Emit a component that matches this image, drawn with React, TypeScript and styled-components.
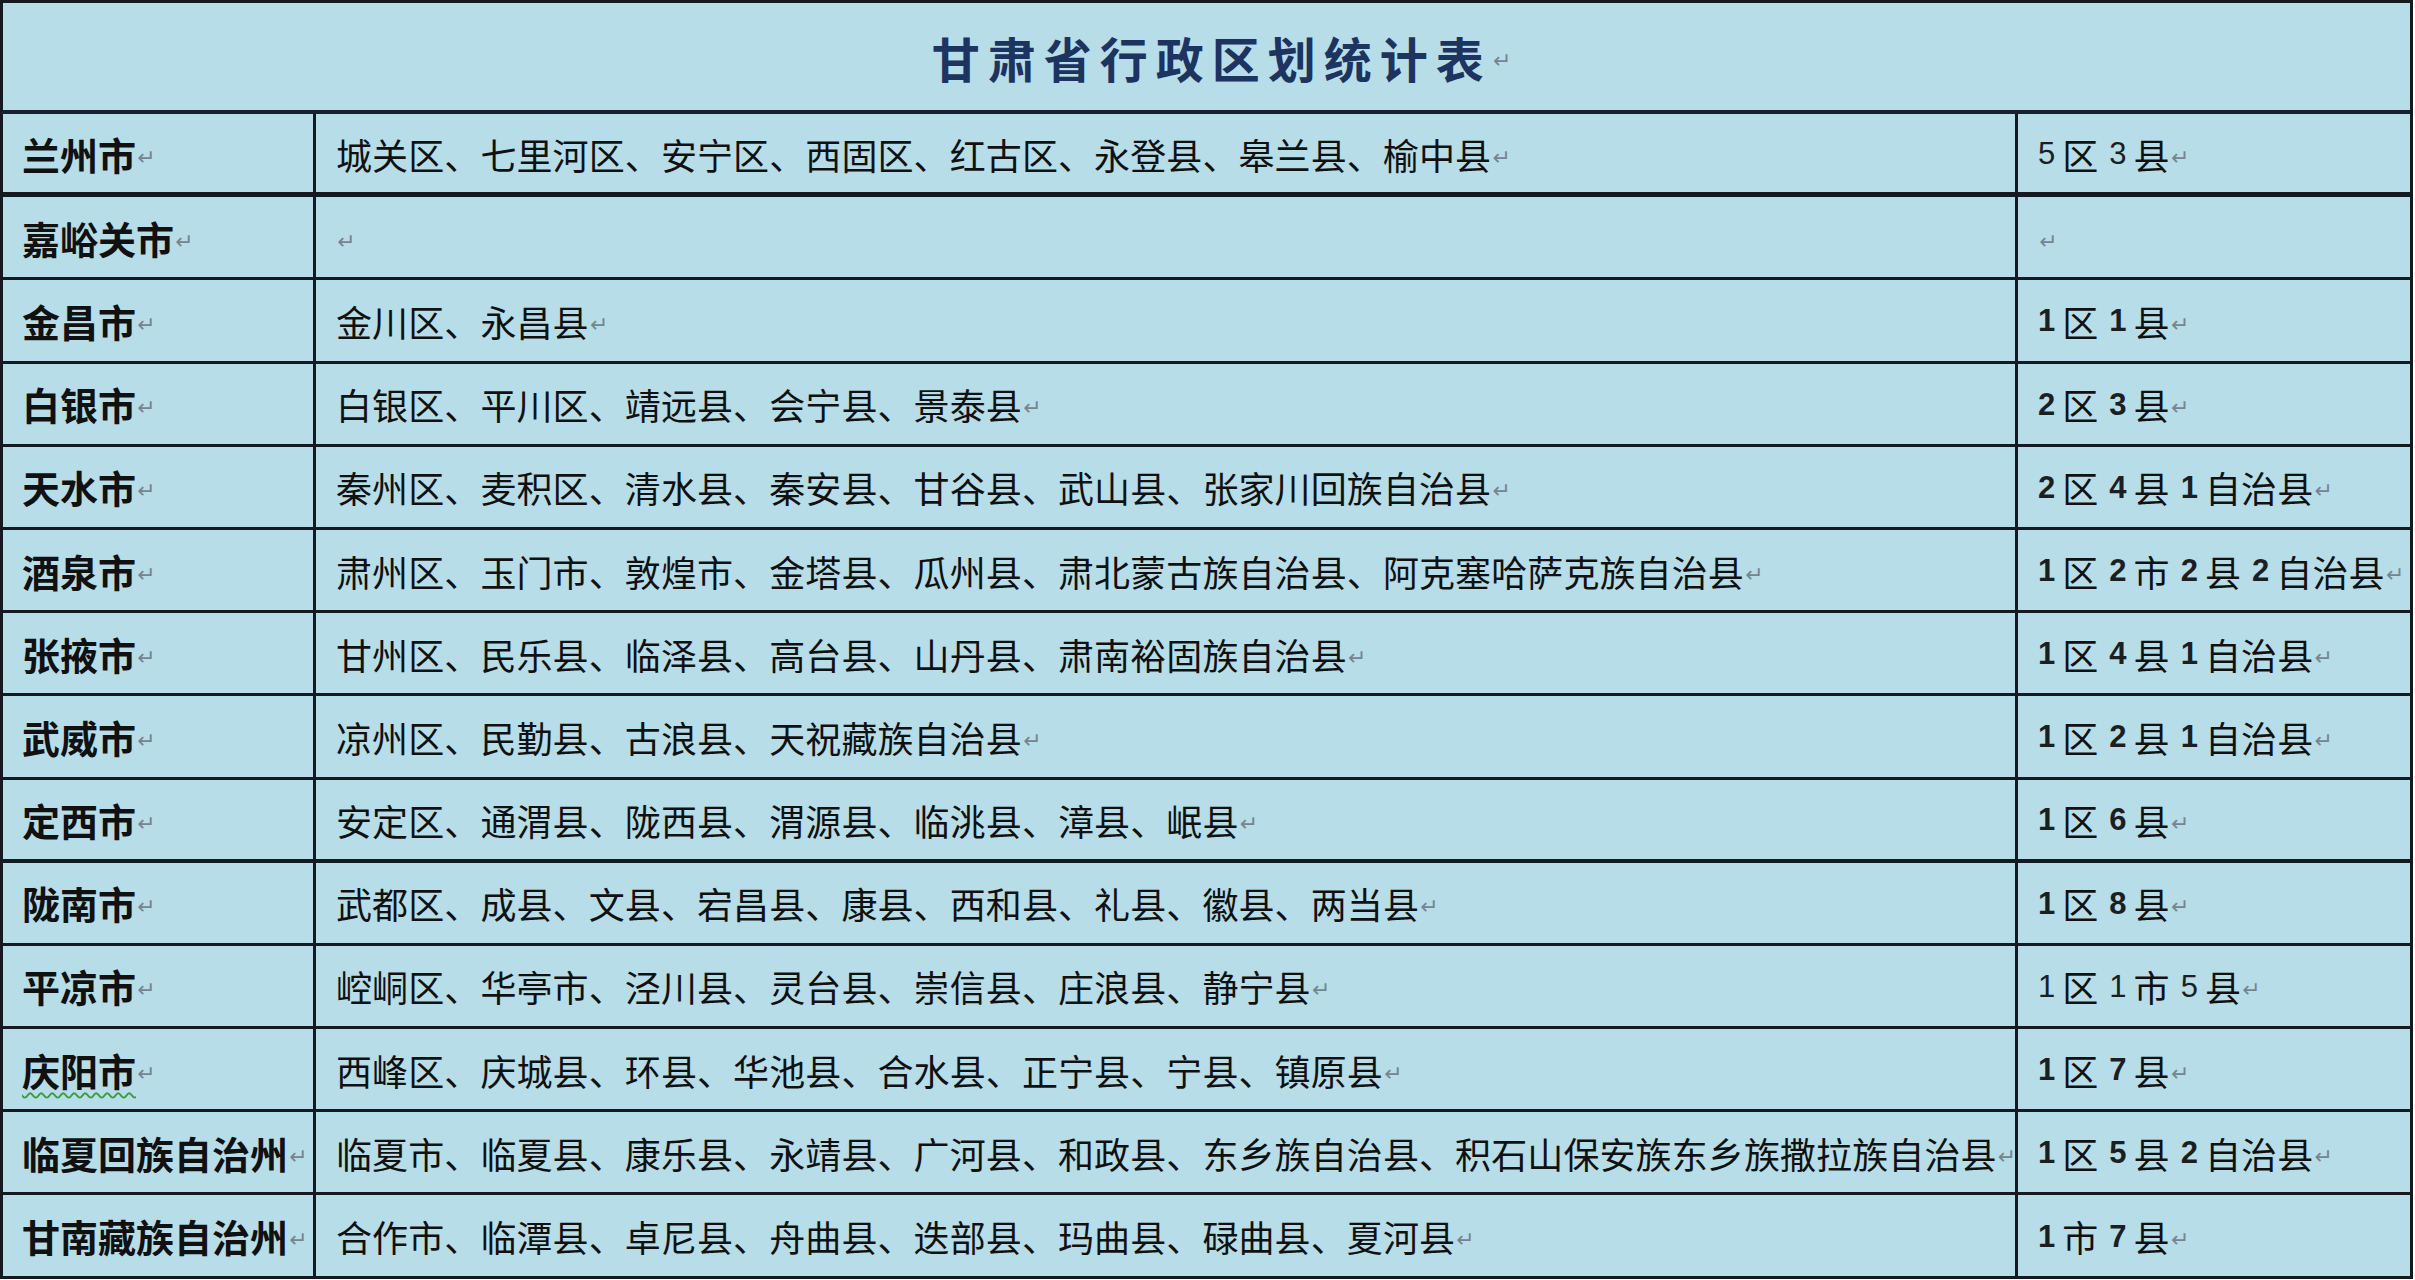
import React from 'react';
import styled, { createGlobalStyle } from 'styled-components';

const GlobalStyle = createGlobalStyle`
    html, body {
        margin: 0;
        padding: 0;
        background: #ffffff;
    }
    body {
        font-family: "Noto Sans CJK SC", "Liberation Sans", sans-serif;
        color: #111111;
    }
`;

const Sheet = styled.div`
    box-sizing: border-box;
    width: 2413px;
    display: grid;
    grid-template-columns: 313px 1702px 1fr;
    grid-template-rows: 111px repeat(14, 83.2px);
    border-top: 3px solid #141a20;
    border-right: 3px solid #141a20;
    background: #b6dde8;
`;

const TitleCell = styled.div`
    grid-column: 1 / -1;
    box-sizing: border-box;
    display: flex;
    align-items: center;
    justify-content: center;
    border-left: 3px solid #141a20;
    border-bottom: 4px solid #17222e;
    padding-left: 30px;
`;

const TitleText = styled.span`
    font-family: "Noto Sans CJK SC", sans-serif;
    font-weight: 700;
    font-size: 48px;
    letter-spacing: 8px;
    line-height: 1;
    color: #1d3360;
`;

const Cell = styled.div<{ $col: number; $bottom: number }>`
    box-sizing: border-box;
    display: flex;
    align-items: center;
    overflow: hidden;
    white-space: nowrap;
    border-left: 3px solid #141a20;
    border-bottom: ${p => p.$bottom}px solid #141a20;
    padding-left: ${p => (p.$col === 1 ? 19 : 20)}px;
    padding-top: 1px;
    font-size: 36px;
    line-height: 1;
`;

const CityText = styled.span<{ $wavy?: boolean }>`
    font-weight: 700;
    font-size: 38px;
    text-decoration: ${p => (p.$wavy ? 'underline wavy #3d9a3d' : 'none')};
    text-decoration-thickness: 2px;
    text-underline-offset: 6px;
`;

const ListText = styled.span`
    font-weight: 400;
    letter-spacing: 0.1px;
`;

const Num = styled.span<{ $first?: boolean; $light?: boolean }>`
    font-family: "Liberation Sans", sans-serif;
    font-weight: ${p => (p.$light ? 400 : 700)};
    font-size: 31px;
    color: #1b1f22;
    margin-left: ${p => (p.$first ? 0 : 11)}px;
    margin-right: 7px;
`;

const Mark = styled.span<{ $size?: number }>`
    font-family: "DejaVu Sans", sans-serif;
    font-weight: 400;
    font-size: ${p => p.$size || 22}px;
    color: #76848f;
    margin-left: 1px;
    position: relative;
    top: 4px;
    letter-spacing: 0;
`;

type Row = {
    city: string;
    list: string;
    count: [number, string][];
    bottom?: number;
    wavy?: boolean;
    light?: boolean;
};

const rows: Row[] = [
    { city: '兰州市', list: '城关区、七里河区、安宁区、西固区、红古区、永登县、皋兰县、榆中县', count: [[5, '区'], [3, '县']], bottom: 5, light: true },
    { city: '嘉峪关市', list: '', count: [] },
    { city: '金昌市', list: '金川区、永昌县', count: [[1, '区'], [1, '县']] },
    { city: '白银市', list: '白银区、平川区、靖远县、会宁县、景泰县', count: [[2, '区'], [3, '县']] },
    { city: '天水市', list: '秦州区、麦积区、清水县、秦安县、甘谷县、武山县、张家川回族自治县', count: [[2, '区'], [4, '县'], [1, '自治县']] },
    { city: '酒泉市', list: '肃州区、玉门市、敦煌市、金塔县、瓜州县、肃北蒙古族自治县、阿克塞哈萨克族自治县', count: [[1, '区'], [2, '市'], [2, '县'], [2, '自治县']] },
    { city: '张掖市', list: '甘州区、民乐县、临泽县、高台县、山丹县、肃南裕固族自治县', count: [[1, '区'], [4, '县'], [1, '自治县']] },
    { city: '武威市', list: '凉州区、民勤县、古浪县、天祝藏族自治县', count: [[1, '区'], [2, '县'], [1, '自治县']] },
    { city: '定西市', list: '安定区、通渭县、陇西县、渭源县、临洮县、漳县、岷县', count: [[1, '区'], [6, '县']], bottom: 4 },
    { city: '陇南市', list: '武都区、成县、文县、宕昌县、康县、西和县、礼县、徽县、两当县', count: [[1, '区'], [8, '县']] },
    { city: '平凉市', list: '崆峒区、华亭市、泾川县、灵台县、崇信县、庄浪县、静宁县', count: [[1, '区'], [1, '市'], [5, '县']], light: true },
    { city: '庆阳市', list: '西峰区、庆城县、环县、华池县、合水县、正宁县、宁县、镇原县', count: [[1, '区'], [7, '县']], wavy: true },
    { city: '临夏回族自治州', list: '临夏市、临夏县、康乐县、永靖县、广河县、和政县、东乡族自治县、积石山保安族东乡族撒拉族自治县', count: [[1, '区'], [5, '县'], [2, '自治县']] },
    { city: '甘南藏族自治州', list: '合作市、临潭县、卓尼县、舟曲县、迭部县、玛曲县、碌曲县、夏河县', count: [[1, '市'], [7, '县']] },
];

const App = () => {
    return (
        <>
            <GlobalStyle />
            <Sheet>
                <TitleCell>
                    <TitleText>甘肃省行政区划统计表</TitleText>
                    <Mark $size={22}>↵</Mark>
                </TitleCell>
                {rows.map((row: Row) => {
                    const bottom = row.bottom || 3;
                    return (
                        <React.Fragment key={row.city}>
                            <Cell $col={1} $bottom={bottom}>
                                <CityText $wavy={row.wavy}>{row.city}</CityText>
                                <Mark>↵</Mark>
                            </Cell>
                            <Cell $col={2} $bottom={bottom}>
                                <ListText>{row.list}</ListText>
                                <Mark>↵</Mark>
                            </Cell>
                            <Cell $col={3} $bottom={bottom}>
                                {row.count.map(([n, unit], i) => (
                                    <React.Fragment key={i}>
                                        <Num $first={i === 0} $light={row.light}>{n}</Num>
                                        <ListText>{unit}</ListText>
                                    </React.Fragment>
                                ))}
                                <Mark>↵</Mark>
                            </Cell>
                        </React.Fragment>
                    );
                })}
            </Sheet>
        </>
    );
};

export default App;
